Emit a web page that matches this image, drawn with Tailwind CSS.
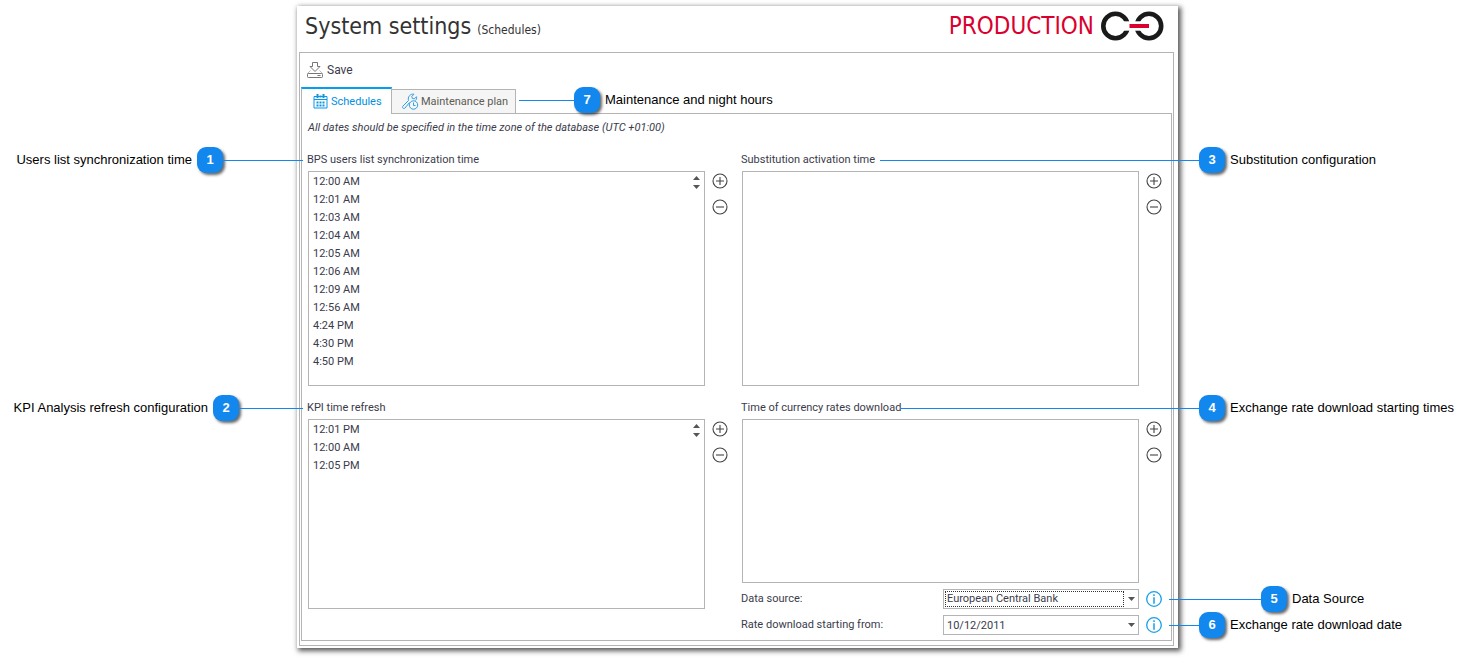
<!DOCTYPE html>
<html lang="en">
<head>
<meta charset="utf-8">
<meta name="viewport" content="width=device-width, initial-scale=1">
<title>System settings</title>
<script src="https://cdn.jsdelivr.net/npm/@tailwindcss/browser@4"></script>
</head>
<body class="bg-white">
<svg class="hidden" aria-hidden="true">
  <symbol id="plus" viewBox="0 0 16 16"><circle cx="8" cy="8" r="7" fill="none" stroke="#444" stroke-width="1.1"/><path d="M4 8h8M8 4v8" stroke="#444" stroke-width="1.1"/></symbol>
  <symbol id="minus" viewBox="0 0 16 16"><circle cx="8" cy="8" r="7" fill="none" stroke="#444" stroke-width="1.1"/><path d="M4 8h8" stroke="#444" stroke-width="1.1"/></symbol>
  <symbol id="info" viewBox="0 0 16 16"><circle cx="8" cy="8" r="7.3" fill="none" stroke="#16a0e8" stroke-width="1.3"/><path d="M8 6.3v6.4M8 3.2v1.7" stroke="#16a0e8" stroke-width="1.5"/></symbol>
  <symbol id="down" viewBox="0 0 7 4"><path d="M0 0h7L3.500 4z" fill="#555"/></symbol>
  <symbol id="up" viewBox="0 0 7 4"><path d="M0 4h7L3.500 0z" fill="#555"/></symbol>
</svg>
<div class="pt-[6px] pb-[10px] pl-[297px] pr-[294px] font-[Roboto,'Noto_Sans',sans-serif] text-[11px] leading-[14px] text-[#3b3b4b]">
<main class="bg-white px-[2px] pb-[2px] shadow-[2px_2px_5px_1px_rgba(0,0,0,0.65)]">
  <header class="flex h-[46px] items-start justify-between pl-[6px] pr-[12px] pt-[4px] font-['DejaVu_Sans_Condensed','Noto_Sans',sans-serif]">
    <h1 class="flex items-baseline gap-[6px] text-[23px] leading-[32px] text-[#333]">System settings <span class="text-[12px]">(Schedules)</span></h1>
    <div class="flex items-center gap-[6px] text-[24px] leading-[32px] text-[#d9002f]">
      <span>PRODUCTION</span>
      <svg class="h-[30px] w-[64px]" viewBox="0 0 64 30" aria-hidden="true">
        <g fill="none" stroke="#1a1a1a" stroke-width="4.600"><circle cx="15.500" cy="15" r="12.200"/><circle cx="49" cy="15" r="12.200"/></g>
        <path d="M24 10.300h17v9.400H24z" fill="#fff"/>
        <path d="M29.500 13h19.500v4H29.500z" fill="#d9002f"/>
      </svg>
    </div>
  </header>
  <div class="border border-[#b4b4b4] px-px pb-[4px] mr-[2px]">
    <div class="flex h-[34px] items-center pl-[6px]">
      <button type="button" class="flex items-center gap-[4px] text-[12px]">
        <svg class="size-[16px]" viewBox="0 0 16 16" fill="none" stroke="#777" stroke-width="1" aria-hidden="true"><path d="M5.500.5h5v4h2.500L8 9.500 3 4.500h2.500z"/><path d="M3.500 8.500L.5 11.500M12.500 8.500l3 3" stroke="#bbb"/><rect x=".5" y="11.500" width="15" height="4" rx=".8"/><path d="M10.500 13.500h3"/></svg>
        Save</button>
    </div>
    <div class="relative z-10 -mb-px flex h-[27px] items-end" role="tablist">
      <button type="button" role="tab" aria-selected="true" class="flex h-[27px] w-[91px] items-center gap-[3px] border-x border-t-2 border-x-[#b4b4b4] border-t-[#009ff0] bg-white pl-[11px] text-[#0090e0]">
        <svg class="size-[15px]" viewBox="0 0 15 15" fill="none" stroke="#0b96e5" aria-hidden="true"><path d="M1 2.500h13v11.500H1zM1 5.500h13"/><path d="M4.500 0v4M10.500 0v4M6.500 2.500h2" stroke-width="2"/><path d="M3.500 8.500h8M3.500 11.500h8" stroke-width="2" stroke-dasharray="2 1"/></svg>
        Schedules</button>
      <button type="button" role="tab" aria-selected="false" class="flex h-[25px] w-[124px] items-center gap-[2px] border border-l-0 border-[#b4b4b4] bg-[#f5f5f5] pl-[10px] text-[#5c5c52]">
        <svg class="size-[17px]" viewBox="0 0 17 17" fill="none" stroke="#2f9fe0" stroke-width="1" aria-hidden="true"><path d="M7.500 9.500l-4.500 5.500c-1.500 1.500-3.500-.5-2-2L6.500 7.500C5.500 4 8 .5 12 1.200L9.800 3.400l.5 2 2 .5 2.200-2.200c.3 1.500 0 2.800-1 3.800"/><circle cx="11.500" cy="12" r="4.200"/><path d="M11.500 9.500v3h2"/></svg>
        Maintenance plan</button>
      <div class="ml-[3px] flex h-[28px] items-center font-['Liberation_Sans',Arial,sans-serif] text-[13px] text-black">
        <span class="mt-px h-px w-[55px] bg-[#1287ee]"></span>
        <span class="flex size-[26px] items-center justify-center rounded-[9px] bg-[#1287ee] font-bold text-white shadow-[2px_2px_3px_rgba(0,0,0,0.6)]">7</span>
        <span class="pl-[5px]">Maintenance and night hours</span>
      </div>
    </div>
    <section class="border border-[#b4b4b4] pb-[5px] pl-[6px] pr-[9px] pt-[7px]">
      <p class="italic">All dates should be specified in the time zone of the database (UTC +01:00)</p>
      <div class="mt-[18px] grid grid-cols-2 gap-x-[14px]">

        <section class="flex flex-col gap-[4px]">
          <div class="relative h-[14px]">
            <h2 id="l1" class="-ml-px">BPS users list synchronization time</h2>
            <div class="absolute right-full top-1/2 mr-[5px] flex -translate-y-1/2 items-center whitespace-nowrap font-['Liberation_Sans',Arial,sans-serif] text-[13px] text-black">
              <span class="pr-[5px]">Users list synchronization time</span>
              <span class="flex size-[26px] items-center justify-center rounded-[9px] bg-[#1287ee] font-bold text-white shadow-[2px_2px_3px_rgba(0,0,0,0.6)]">1</span>
              <span class="mt-px h-px w-[80px] bg-[#1287ee]"></span>
            </div>
          </div>
          <div class="flex gap-[7px]">
            <div class="flex h-[215px] flex-1 justify-between border border-[#b4b4b4] pl-[4px] pr-[4px]">
              <ul role="listbox" aria-labelledby="l1" class="pt-px leading-[18px]">
                <li role="option">12:00 AM</li><li role="option">12:01 AM</li><li role="option">12:03 AM</li><li role="option">12:04 AM</li><li role="option">12:05 AM</li><li role="option">12:06 AM</li><li role="option">12:09 AM</li><li role="option">12:56 AM</li><li role="option">4:24 PM</li><li role="option">4:30 PM</li><li role="option">4:50 PM</li>
              </ul>
              <div class="flex flex-col gap-[5px] pt-[4px]">
                <button type="button" aria-label="Scroll up"><svg class="h-[4px] w-[7px]"><use href="#up"/></svg></button>
                <button type="button" aria-label="Scroll down"><svg class="h-[4px] w-[7px]"><use href="#down"/></svg></button>
              </div>
            </div>
            <div class="flex flex-col gap-[10px] pt-[2px]">
              <button type="button" aria-label="Add"><svg class="size-[16px]"><use href="#plus"/></svg></button>
              <button type="button" aria-label="Remove"><svg class="size-[16px]"><use href="#minus"/></svg></button>
            </div>
          </div>
        </section>

        <section class="flex flex-col gap-[4px]">
          <div class="relative -mr-[37px] flex h-[14px] items-center gap-[5px]">
            <h2 id="l3" class="-ml-px">Substitution activation time</h2>
            <span class="mt-px h-px flex-1 bg-[#1287ee]"></span>
            <div class="absolute left-full top-1/2 flex -translate-y-1/2 items-center whitespace-nowrap font-['Liberation_Sans',Arial,sans-serif] text-[13px] text-black">
              <span class="flex size-[26px] items-center justify-center rounded-[9px] bg-[#1287ee] font-bold text-white shadow-[2px_2px_3px_rgba(0,0,0,0.6)]">3</span>
              <span class="pl-[5px]">Substitution configuration</span>
            </div>
          </div>
          <div class="flex gap-[7px]">
            <ul role="listbox" aria-labelledby="l3" class="h-[215px] flex-1 border border-[#b4b4b4]"></ul>
            <div class="flex flex-col gap-[10px] pt-[2px]">
              <button type="button" aria-label="Add"><svg class="size-[16px]"><use href="#plus"/></svg></button>
              <button type="button" aria-label="Remove"><svg class="size-[16px]"><use href="#minus"/></svg></button>
            </div>
          </div>
        </section>

        <section class="mt-[15px] flex flex-col gap-[4px]">
          <div class="relative h-[14px]">
            <h2 id="l2" class="-ml-px">KPI time refresh</h2>
            <div class="absolute right-full top-1/2 mr-[5px] flex -translate-y-1/2 items-center whitespace-nowrap font-['Liberation_Sans',Arial,sans-serif] text-[13px] text-black">
              <span class="pr-[5px]">KPI Analysis refresh configuration</span>
              <span class="flex size-[26px] items-center justify-center rounded-[9px] bg-[#1287ee] font-bold text-white shadow-[2px_2px_3px_rgba(0,0,0,0.6)]">2</span>
              <span class="mt-px h-px w-[64px] bg-[#1287ee]"></span>
            </div>
          </div>
          <div class="flex gap-[7px]">
            <div class="flex h-[190px] flex-1 justify-between border border-[#b4b4b4] pl-[4px] pr-[4px]">
              <ul role="listbox" aria-labelledby="l2" class="pt-px leading-[18px]">
                <li role="option">12:01 PM</li><li role="option">12:00 AM</li><li role="option">12:05 PM</li>
              </ul>
              <div class="flex flex-col gap-[5px] pt-[4px]">
                <button type="button" aria-label="Scroll up"><svg class="h-[4px] w-[7px]"><use href="#up"/></svg></button>
                <button type="button" aria-label="Scroll down"><svg class="h-[4px] w-[7px]"><use href="#down"/></svg></button>
              </div>
            </div>
            <div class="flex flex-col gap-[10px] pt-[2px]">
              <button type="button" aria-label="Add"><svg class="size-[16px]"><use href="#plus"/></svg></button>
              <button type="button" aria-label="Remove"><svg class="size-[16px]"><use href="#minus"/></svg></button>
            </div>
          </div>
        </section>

        <section class="mt-[15px] flex flex-col gap-[4px]">
          <div class="relative -mr-[37px] flex h-[14px] items-center">
            <h2 id="l4" class="-ml-px">Time of currency rates download</h2>
            <span class="mt-px h-px flex-1 bg-[#1287ee]"></span>
            <div class="absolute left-full top-1/2 flex -translate-y-1/2 items-center whitespace-nowrap font-['Liberation_Sans',Arial,sans-serif] text-[13px] text-black">
              <span class="flex size-[26px] items-center justify-center rounded-[9px] bg-[#1287ee] font-bold text-white shadow-[2px_2px_3px_rgba(0,0,0,0.6)]">4</span>
              <span class="pl-[5px]">Exchange rate download starting times</span>
            </div>
          </div>
          <div class="flex gap-[7px]">
            <ul role="listbox" aria-labelledby="l4" class="h-[164px] flex-1 border border-[#b4b4b4]"></ul>
            <div class="flex flex-col gap-[10px] pt-[2px]">
              <button type="button" aria-label="Add"><svg class="size-[16px]"><use href="#plus"/></svg></button>
              <button type="button" aria-label="Remove"><svg class="size-[16px]"><use href="#minus"/></svg></button>
            </div>
          </div>
          <div class="mt-[2px] flex flex-col gap-[6px]">
            <div class="relative flex h-[20px] items-center gap-[7px]">
              <label for="source" class="-ml-px flex-1">Data source:</label>
              <div class="relative h-[20px] w-[196px]">
                <select id="source" class="h-full w-full appearance-none border border-[#b4b4b4] bg-white pl-[3px] outline-none"><option>European Central Bank</option></select>
                <span class="pointer-events-none absolute inset-y-[2px] left-[2px] right-[15px] border border-dotted border-[#333]"></span>
                <svg class="pointer-events-none absolute right-[4px] top-[8px] h-[4px] w-[7px]" aria-hidden="true"><use href="#down"/></svg>
              </div>
              <button type="button" aria-label="Data source information"><svg class="size-[16px]"><use href="#info"/></svg></button>
              <div class="absolute left-full top-1/2 ml-[7px] flex -translate-y-1/2 items-center whitespace-nowrap font-['Liberation_Sans',Arial,sans-serif] text-[13px] text-black">
                <span class="mt-px h-px w-[92px] bg-[#1287ee]"></span>
                <span class="flex size-[26px] items-center justify-center rounded-[9px] bg-[#1287ee] font-bold text-white shadow-[2px_2px_3px_rgba(0,0,0,0.6)]">5</span>
                <span class="pl-[5px]">Data Source</span>
              </div>
            </div>
            <div class="relative flex h-[20px] items-center gap-[7px]">
              <label for="from" class="-ml-px flex-1">Rate download starting from:</label>
              <div class="relative h-[20px] w-[196px]">
                <input id="from" type="text" value="10/12/2011" class="h-full w-full border border-[#b4b4b4] bg-white pl-[3px] outline-none">
                <button type="button" aria-label="Open calendar" class="absolute inset-y-0 right-[4px] flex items-center"><svg class="h-[4px] w-[7px]"><use href="#down"/></svg></button>
              </div>
              <button type="button" aria-label="Start date information"><svg class="size-[16px]"><use href="#info"/></svg></button>
              <div class="absolute left-full top-1/2 ml-[7px] flex -translate-y-1/2 items-center whitespace-nowrap font-['Liberation_Sans',Arial,sans-serif] text-[13px] text-black">
                <span class="mt-px h-px w-[30px] bg-[#1287ee]"></span>
                <span class="flex size-[26px] items-center justify-center rounded-[9px] bg-[#1287ee] font-bold text-white shadow-[2px_2px_3px_rgba(0,0,0,0.6)]">6</span>
                <span class="pl-[5px]">Exchange rate download date</span>
              </div>
            </div>
          </div>
        </section>
      </div>
    </section>
  </div>
</main>
</div>
</body>
</html>
